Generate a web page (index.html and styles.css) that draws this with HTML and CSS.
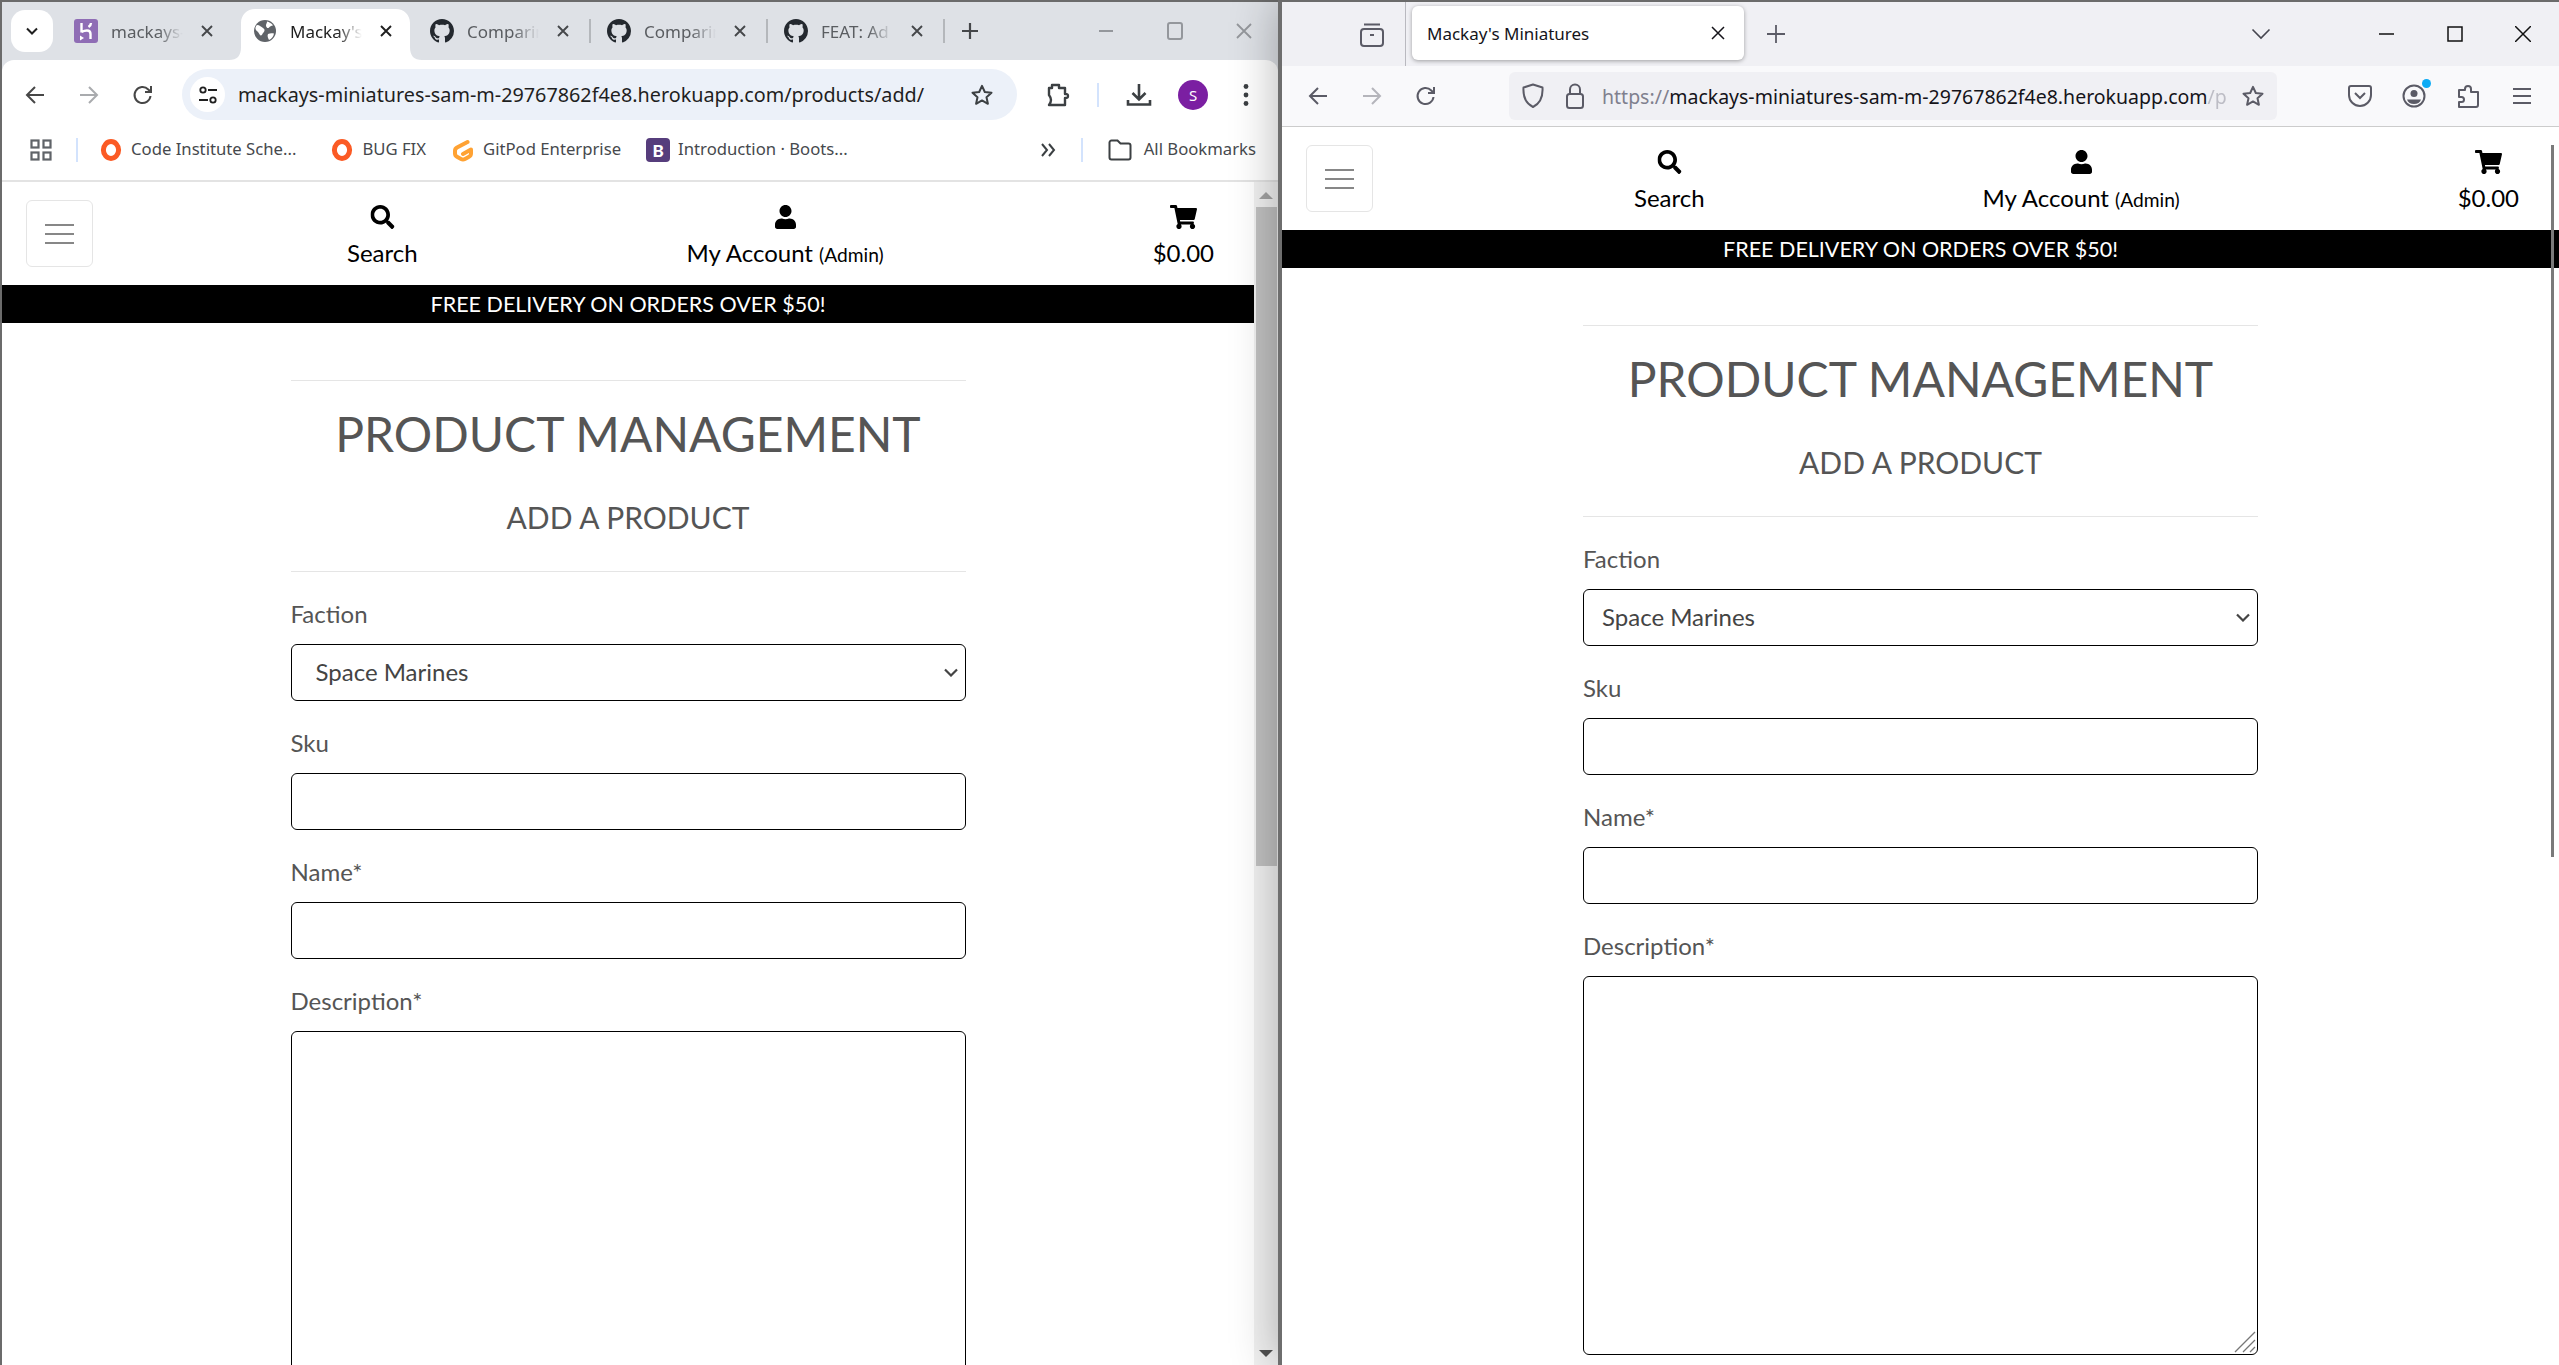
FILE: index.html
```html
<!DOCTYPE html>
<html lang="en">
<head>
  <meta charset="utf-8">
  <title>Mackay's Miniatures</title>
  <link rel="stylesheet" href="styles.css">
</head>
<body>
  <!-- Shared icons -->
  <svg class="icon-defs" xmlns="http://www.w3.org/2000/svg">
    <symbol id="i-github" viewBox="0 0 16 16"><path fill="#24292f" d="M8 0C3.58 0 0 3.58 0 8c0 3.54 2.29 6.53 5.47 7.59.4.07.55-.17.55-.38 0-.19-.01-.82-.01-1.49-2.01.37-2.53-.49-2.69-.94-.09-.23-.48-.94-.82-1.13-.28-.15-.68-.52-.01-.53.63-.01 1.08.58 1.23.82.72 1.21 1.87.87 2.33.66.07-.52.28-.87.51-1.07-1.78-.2-3.64-.89-3.64-3.95 0-.87.31-1.59.82-2.15-.08-.2-.36-1.02.08-2.12 0 0 .67-.21 2.2.82.64-.18 1.32-.27 2-.27.68 0 1.36.09 2 .27 1.53-1.04 2.2-.82 2.2-.82.44 1.1.16 1.92.08 2.12.51.56.82 1.27.82 2.15 0 3.07-1.87 3.75-3.65 3.95.29.25.54.73.54 1.48 0 1.07-.01 1.93-.01 2.2 0 .21.15.46.55.38A8.013 8.013 0 0016 8c0-4.42-3.58-8-8-8z"/></symbol>
    <symbol id="i-x" viewBox="0 0 14 14"><path d="M2 2l10 10M12 2L2 12" fill="none" stroke="currentColor" stroke-width="1.9"/></symbol>
    <symbol id="i-back" viewBox="0 0 24 24"><path d="M21 12H4M12 4l-8 8 8 8" fill="none" stroke="currentColor" stroke-width="2"/></symbol>
    <symbol id="i-forward" viewBox="0 0 24 24"><path d="M3 12h17M12 4l8 8-8 8" fill="none" stroke="currentColor" stroke-width="2"/></symbol>
    <symbol id="i-reload" viewBox="0 0 24 24"><path d="M19.5 13a8 8 0 1 1-2.2-6.5L20 9M20 3v6h-6" fill="none" stroke="currentColor" stroke-width="2"/></symbol>
    <symbol id="i-star" viewBox="0 0 24 24"><path d="M12 2.8l2.8 6.2 6.7.7-5 4.5 1.4 6.6-5.9-3.4-5.9 3.4 1.4-6.6-5-4.5 6.7-.7z" fill="none" stroke="currentColor" stroke-width="2" stroke-linejoin="round"/></symbol>
    <symbol id="i-search" viewBox="0 0 512 512"><path d="M505 442.7L405.3 343c-4.5-4.5-10.6-7-17-7H372c27.6-35.3 44-79.7 44-128C416 93.1 322.9 0 208 0S0 93.1 0 208s93.1 208 208 208c48.3 0 92.7-16.4 128-44v16.3c0 6.4 2.5 12.5 7 17l99.7 99.7c9.4 9.4 24.6 9.4 33.9 0l28.3-28.3c9.4-9.4 9.4-24.6.1-34zM208 336c-70.7 0-128-57.2-128-128 0-70.7 57.2-128 128-128 70.7 0 128 57.2 128 128 0 70.7-57.2 128-128 128z"/></symbol>
    <symbol id="i-user" viewBox="0 0 448 512"><path d="M224 256c70.7 0 128-57.3 128-128S294.7 0 224 0 96 57.3 96 128s57.3 128 128 128zm89.6 32h-16.7c-22.2 10.2-46.9 16-72.9 16s-50.6-5.8-72.9-16h-16.7C60.2 288 0 348.2 0 422.4V464c0 26.5 21.5 48 48 48h352c26.5 0 48-21.5 48-48v-41.6c0-74.2-60.2-134.4-134.4-134.4z"/></symbol>
    <symbol id="i-cart" viewBox="0 0 576 512"><path d="M528.12 301.319l47.273-208C578.806 78.301 567.391 64 551.99 64H159.208l-9.166-44.81C147.758 8.021 137.93 0 126.529 0H24C10.745 0 0 10.745 0 24v16c0 13.255 10.745 24 24 24h69.883l70.248 343.435C147.325 417.1 136 435.222 136 456c0 30.928 25.072 56 56 56s56-25.072 56-56c0-15.674-6.447-29.835-16.824-40h209.647C430.447 426.165 424 440.326 424 456c0 30.928 25.072 56 56 56s56-25.072 56-56c0-22.172-12.888-41.332-31.579-50.405l5.517-24.276c3.413-15.018-8.002-29.319-23.403-29.319H218.117l-6.545-32h293.145c11.206 0 20.92-7.754 23.403-18.681z"/></symbol>
    <symbol id="i-ring" viewBox="0 0 22 22"><ellipse cx="11" cy="11" rx="7.6" ry="8.4" fill="none" stroke="#fb5a24" stroke-width="5"/></symbol>
  </svg>

  <!-- Left window: Chrome -->
  <div class="win win-chrome">
    <div class="ch-tabs">
      <button class="ch-tabsearch"><svg width="14" height="14" viewBox="0 0 14 14"><path d="M2 4.500l5 5 5-5" fill="none" stroke="#1f1f1f" stroke-width="2"/></svg></button>
      <div class="tab tab-first">
        <svg class="favicon" viewBox="0 0 24 24"><rect width="24" height="24" rx="3" fill="#8f6db5"/><path d="M7.500 4v9.500M7.500 13c3-1.500 9-3 9 2v5M17 4c0 2-1 3-2.500 4" fill="none" stroke="#fff" stroke-width="2.400"/><path d="M6 16.500l4 2.500-4 2.500z" fill="#fff"/></svg>
        <span class="tab-title">mackays-</span>
        <svg class="tab-close"><use href="#i-x"/></svg>
      </div>
      <div class="tab tab-active">
        <svg class="tab-shape" viewBox="0 0 193 51"><path fill="#fff" d="M0 51C8 51 12 47 12 38V14C12 6 18 0 26 0H167C175 0 181 6 181 14V38C181 47 185 51 193 51Z"/></svg>
        <svg class="favicon" viewBox="0 0 24 24"><circle cx="12" cy="12" r="11" fill="#5f6368"/><path d="M4 6c3 0 4 2 6 3s2 3 .5 4.500-1 3-3 3c-1.500-1-1.500-3-3-4S1 9 4 6zM14 2.500c2 .5 5 2 6 4-2 .5-3 .5-4 2s-3 0-3-2 1-2 1-4zM15 15c2-1 4-1 6-.5-.5 3-2.500 5.500-5 6.500-1-2-2-4-1-6z" fill="#fff"/></svg>
        <span class="tab-title">Mackay's</span>
        <svg class="tab-close"><use href="#i-x"/></svg>
      </div>
      <div class="tab tab-sep">
        <svg class="favicon"><use href="#i-github"/></svg>
        <span class="tab-title">Comparin</span>
        <svg class="tab-close"><use href="#i-x"/></svg>
      </div>
      <div class="tab tab-sep">
        <svg class="favicon"><use href="#i-github"/></svg>
        <span class="tab-title">Comparin</span>
        <svg class="tab-close"><use href="#i-x"/></svg>
      </div>
      <div class="tab tab-sep">
        <svg class="favicon"><use href="#i-github"/></svg>
        <span class="tab-title">FEAT: Ad</span>
        <svg class="tab-close"><use href="#i-x"/></svg>
      </div>
      <svg class="ch-plus" width="24" height="24" viewBox="0 0 24 24"><path d="M12 4v16M4 12h16" stroke="#45474a" stroke-width="2.200"/></svg>
      <div class="ch-controls">
        <span class="ctl"><svg width="16" height="16" viewBox="0 0 16 16"><path d="M1 8h14" stroke="#94979c" stroke-width="2"/></svg></span>
        <span class="ctl"><svg width="16" height="20" viewBox="0 0 16 20"><rect x="1" y="2" width="14" height="16" rx="2" fill="none" stroke="#94979c" stroke-width="2"/></svg></span>
        <span class="ctl"><svg width="18" height="18" viewBox="0 0 18 18"><path d="M2 2l14 14M16 2L2 16" stroke="#94979c" stroke-width="1.800"/></svg></span>
      </div>
    </div>

    <div class="ch-toolbar">
      <button class="nav-btn"><svg width="24" height="24"><use href="#i-back"/></svg></button>
      <button class="nav-btn nav-off"><svg width="24" height="24"><use href="#i-forward"/></svg></button>
      <button class="nav-btn"><svg width="24" height="24"><use href="#i-reload"/></svg></button>
      <div class="ch-pill">
        <span class="ch-tune"><svg width="22" height="22" viewBox="0 0 22 22"><g fill="none" stroke="#1f1f1f" stroke-width="1.800"><circle cx="6" cy="6" r="2.700"/><path d="M11 6h9M2 16h9"/><circle cx="16" cy="16" r="2.700"/></g></svg></span>
        <span class="ch-url">mackays-miniatures-sam-m-29767862f4e8.herokuapp.com/products/add/</span>
        <svg class="ch-star" width="24" height="24"><use href="#i-star"/></svg>
      </div>
      <button class="nav-btn nav-ext"><svg width="26" height="26" viewBox="0 0 26 26"><path d="M8 3h7v3h6v6c2 0 3 0 3 2s-1 2-3 2v7H5c1.500-2 2-3 2-5s-.5-3-2-5V6h3z" fill="none" stroke="#3c4043" stroke-width="2.400" stroke-linejoin="round"/></svg></button>
      <i class="ch-divider"></i>
      <button class="nav-btn"><svg width="26" height="26" viewBox="0 0 26 26"><path d="M13 2v15M6.500 11l6.500 6.500 6.500-6.500M2 18v4.500h22V18" fill="none" stroke="#3c4043" stroke-width="2.600"/></svg></button>
      <span class="ch-avatar">S</span>
      <button class="nav-btn nav-dots"><svg width="6" height="24" viewBox="0 0 6 24"><circle cx="3" cy="3.500" r="2.400"/><circle cx="3" cy="12" r="2.400"/><circle cx="3" cy="20.500" r="2.400"/></svg></button>
    </div>

    <div class="ch-bookmarks">
      <svg class="bm-apps" width="22" height="22" viewBox="0 0 22 22"><g fill="none" stroke="#5f6368" stroke-width="2.200"><rect x="1.500" y="1.500" width="7" height="7"/><rect x="13.500" y="1.500" width="7" height="7"/><rect x="1.500" y="13.500" width="7" height="7"/><rect x="13.500" y="13.500" width="7" height="7"/></g></svg>
      <i class="bm-divider"></i>
      <span class="bm bm-long"><svg class="bm-icon"><use href="#i-ring"/></svg>Code Institute Sche...</span>
      <span class="bm"><svg class="bm-icon"><use href="#i-ring"/></svg>BUG FIX</span>
      <span class="bm bm-gitpod"><svg class="bm-icon" viewBox="0 0 22 24"><path d="M15.500 4L5 9.500C3.600 10.300 3 11.300 3 12.700V15.500C3 17 3.600 18 5 18.800L9 21C10.300 21.700 11.700 21.700 13 21L17 18.800C18.400 18 19 17 19 15.500V11.500L11 16" fill="none" stroke="#ffa233" stroke-width="4" stroke-linecap="round" stroke-linejoin="round"/></svg>GitPod Enterprise</span>
      <span class="bm"><span class="bm-boot">B</span>Introduction · Boots...</span>
      <span class="bm-more">
        <svg width="16" height="14" viewBox="0 0 16 14"><path d="M2 1l5 6-5 6M9 1l5 6-5 6" fill="none" stroke="#3c4043" stroke-width="2"/></svg>
      </span>
      <i class="bm-divider bm-divider-end"></i>
      <span class="bm bm-folder"><svg class="bm-icon bm-icon-folder" viewBox="0 0 24 22"><path d="M1.500 3.500a2 2 0 0 1 2-2h6l3 3h8a2 2 0 0 1 2 2v12a2 2 0 0 1-2 2h-17a2 2 0 0 1-2-2z" fill="none" stroke="#3c4043" stroke-width="2"/></svg>All Bookmarks</span>
    </div>

    <div class="ch-page">
      <div class="page">
        <div class="site-nav">
          <button class="toggler"><i></i><i></i><i></i></button>
          <div class="site-links">
            <a class="site-link"><svg class="site-icon" viewBox="0 0 512 512"><use href="#i-search"/></svg><span>Search</span></a>
            <a class="site-link"><svg class="site-icon" viewBox="0 0 448 512"><use href="#i-user"/></svg><span>My Account <small>(Admin)</small></span></a>
            <a class="site-link"><svg class="site-icon" viewBox="0 0 576 512"><use href="#i-cart"/></svg><span>$0.00</span></a>
          </div>
        </div>
        <div class="banner">FREE DELIVERY ON ORDERS OVER $50!</div>
        <main class="content">
          <hr>
          <h2>PRODUCT MANAGEMENT</h2>
          <h5>ADD A PRODUCT</h5>
          <hr>
          <form>
            <div class="field">
              <label>Faction</label>
              <select class="control control-select"><option>Space Marines</option></select>
            </div>
            <div class="field"><label>Sku</label><input class="control" type="text"></div>
            <div class="field"><label>Name*</label><input class="control" type="text"></div>
            <div class="field"><label>Description*</label><textarea class="control control-area"></textarea></div>
          </form>
        </main>
      </div>
      <div class="scrollbar">
        <span class="sb-up"></span>
        <span class="sb-thumb"></span>
        <span class="sb-down"></span>
      </div>
    </div>
  </div>

  <!-- Right window: Firefox -->
  <div class="win win-firefox">
    <div class="ff-tabs">
      <svg class="ff-view" width="24" height="26" viewBox="0 0 24 26"><g fill="none" stroke="#5b5b66" stroke-width="2"><rect x="1" y="8" width="22" height="17" rx="3"/><path d="M4 3.500h16"/><path d="M10 14h4"/></g></svg>
      <i class="ff-sep"></i>
      <div class="ff-tab">
        <span class="ff-tab-title">Mackay's Miniatures</span>
        <svg class="ff-tab-close" width="14" height="14" viewBox="0 0 14 14"><path d="M1 1l12 12M13 1L1 13" stroke="#15141a" stroke-width="1.500"/></svg>
      </div>
      <svg class="ff-plus" width="20" height="20" viewBox="0 0 20 20"><path d="M10 1v18M1 10h18" stroke="#5b5b66" stroke-width="1.800"/></svg>
      <svg class="ff-list" width="20" height="12" viewBox="0 0 20 12"><path d="M1.500 1.500L10 10l8.500-8.500" fill="none" stroke="#45454f" stroke-width="1.600"/></svg>
      <span class="ctl ctl-ff"><svg width="16" height="16" viewBox="0 0 16 16"><path d="M0 8h15" stroke="#111" stroke-width="1.500"/></svg></span>
      <span class="ctl ctl-ff"><svg width="16" height="16" viewBox="0 0 16 16"><rect x="1" y="1" width="14" height="14" fill="none" stroke="#111" stroke-width="1.500"/></svg></span>
      <span class="ctl ctl-ff"><svg width="16" height="16" viewBox="0 0 16 16"><path d="M0 0l16 16M16 0L0 16" stroke="#111" stroke-width="1.500"/></svg></span>
    </div>

    <div class="ff-toolbar">
      <button class="nav-btn ff-btn"><svg width="24" height="24"><use href="#i-back"/></svg></button>
      <button class="nav-btn ff-btn nav-off"><svg width="24" height="24"><use href="#i-forward"/></svg></button>
      <button class="nav-btn ff-btn"><svg width="24" height="24"><use href="#i-reload"/></svg></button>
      <div class="ff-urlbar">
        <svg class="ff-shield" width="24" height="26" viewBox="0 0 24 26"><path d="M12 1.500l9.500 3c.5 8-1.500 15.500-9.500 19.500C4 20 2 12.500 2.500 4.500z" fill="none" stroke="#5b5b66" stroke-width="2" stroke-linejoin="round"/></svg>
        <svg class="ff-lock" width="20" height="26" viewBox="0 0 20 26"><g fill="none" stroke="#5b5b66" stroke-width="2"><rect x="2" y="11" width="16" height="14" rx="2.500"/><path d="M5 11V6.500a5 5 0 0 1 10 0V11"/></g></svg>
        <span class="ff-url"><span class="ff-url-dim">https://</span>mackays-miniatures-sam-m-29767862f4e8.herokuapp.com<span class="ff-url-dim ff-url-fade">/p</span></span>
        <svg class="ff-star" width="24" height="24"><use href="#i-star"/></svg>
      </div>
      <div class="ff-actions">
        <button class="nav-btn ff-btn"><svg width="24" height="24" viewBox="0 0 24 24"><path d="M3 2h18a2 2 0 0 1 2 2v7c0 6-5 11-11 11S1 17 1 11V4a2 2 0 0 1 2-2z" fill="none" stroke="#5b5b66" stroke-width="2"/><path d="M7 9l5 5 5-5" fill="none" stroke="#5b5b66" stroke-width="2"/></svg></button>
        <button class="nav-btn ff-btn ff-account"><svg width="24" height="24" viewBox="0 0 24 24"><circle cx="12" cy="12" r="10.500" fill="none" stroke="#5b5b66" stroke-width="2"/><circle cx="12" cy="9.500" r="3.500" fill="#5b5b66"/><path d="M5 15.500h14c-1 3-3.500 4.500-7 4.500s-6-1.500-7-4.500z" fill="#5b5b66"/></svg><i class="ff-dot"></i></button>
        <button class="nav-btn ff-btn"><svg width="22" height="24" viewBox="0 0 22 24"><path d="M2 23h17a2 2 0 0 0 2-2V8h-7V5a3 3 0 0 0-6 0v1H2v7h2.500a2.500 2.500 0 0 1 0 5H2z" fill="none" stroke="#5b5b66" stroke-width="2" stroke-linejoin="round"/></svg></button>
        <button class="nav-btn ff-btn"><svg width="20" height="18" viewBox="0 0 20 18"><path d="M1 2h18M1 9h18M1 16h18" stroke="#5b5b66" stroke-width="2"/></svg></button>
      </div>
    </div>

    <div class="page">
      <div class="site-nav">
        <button class="toggler"><i></i><i></i><i></i></button>
        <div class="site-links">
          <a class="site-link"><svg class="site-icon" viewBox="0 0 512 512"><use href="#i-search"/></svg><span>Search</span></a>
          <a class="site-link"><svg class="site-icon" viewBox="0 0 448 512"><use href="#i-user"/></svg><span>My Account <small>(Admin)</small></span></a>
          <a class="site-link"><svg class="site-icon" viewBox="0 0 576 512"><use href="#i-cart"/></svg><span>$0.00</span></a>
        </div>
      </div>
      <div class="banner">FREE DELIVERY ON ORDERS OVER $50!</div>
      <main class="content">
        <hr>
        <h2>PRODUCT MANAGEMENT</h2>
        <h5>ADD A PRODUCT</h5>
        <hr>
        <form>
          <div class="field">
            <label>Faction</label>
            <select class="control control-select"><option>Space Marines</option></select>
          </div>
          <div class="field"><label>Sku</label><input class="control" type="text"></div>
          <div class="field"><label>Name*</label><input class="control" type="text"></div>
          <div class="field">
            <label>Description*</label>
            <div class="area-wrap">
              <textarea class="control control-area"></textarea>
              <svg class="grip" width="22" height="22" viewBox="0 0 22 22"><path d="M21 1L1 21M21 9l-12 12M21 16l-5 5" stroke="#777" stroke-width="1.300"/></svg>
            </div>
          </div>
        </form>
      </main>
      <span class="ff-scroll"></span>
    </div>
  </div>
</body>
</html>
```

FILE: styles.css
```css
/* Desktop: two browser windows side by side */
html, body {
  margin: 0;
  height: 100%;
  overflow: hidden;
  background: #fff;
}

body {
  display: flex;
  font-family: "Lato", sans-serif;
}

button {
  padding: 0;
  border: 0;
  background: none;
  color: inherit;
}

.icon-defs {
  display: none;
}

.win {
  display: flex;
  flex-direction: column;
  height: 1365px;
  box-sizing: border-box;
  border-top: 2px solid #6b6b6b;
  overflow: hidden;
}

.win-chrome {
  width: 1278px;
  flex: none;
  border-left: 2px solid #6b6b6b;
  background: #dee1e6;
  font-family: "Noto Sans", sans-serif;
}

.win-firefox {
  position: relative;
  width: 1281px;
  flex: none;
  border-left: 4px solid #6e6e6e;
  background: #f0f0f4;
  font-family: "Noto Sans", sans-serif;
  box-shadow: 0 0 44px rgba(0, 0, 0, 0.3);
  overflow: visible;
}

/* Shared toolbar buttons */
.nav-btn {
  display: flex;
  align-items: center;
  justify-content: center;
  flex: none;
  width: 40px;
  height: 40px;
  color: #474747;
}

.nav-off {
  color: #a9abae;
}

.ctl {
  display: flex;
  align-items: center;
  justify-content: center;
  flex: none;
  width: 69px;
}

/* Chrome tab strip */
.ch-tabs {
  display: flex;
  align-items: center;
  flex: none;
  height: 58px;
}

.ch-tabsearch {
  display: flex;
  align-items: center;
  justify-content: center;
  flex: none;
  width: 42px;
  height: 42px;
  margin: 0 7px 0 9px;
  border-radius: 14px;
  background: #fff;
}

.tab {
  position: relative;
  display: flex;
  align-items: center;
  flex: none;
  width: 177px;
  height: 100%;
  box-sizing: border-box;
  padding-left: 16px;
  color: #5a5d61;
  font-size: 17px;
}

.tab-first {
  padding-left: 14px;
}

.tab-sep::after {
  content: "";
  position: absolute;
  right: 0;
  top: 17px;
  width: 2px;
  height: 24px;
  background: #b4b7bb;
}

.tab-active {
  color: #1f1f1f;
}

.tab-shape {
  position: absolute;
  left: -8px;
  top: 7px;
  width: 193px;
  height: 51px;
}

.favicon {
  position: relative;
  flex: none;
  width: 24px;
  height: 24px;
}

.tab-title {
  position: relative;
  flex: none;
  width: 72px;
  margin: 0 17px 0 13px;
  white-space: nowrap;
  -webkit-mask-image: linear-gradient(to right, #000 65%, transparent);
  mask-image: linear-gradient(to right, #000 65%, transparent);
}

.tab-close {
  position: relative;
  flex: none;
  width: 14px;
  height: 14px;
  color: #45474a;
}

.tab-active .tab-close {
  color: #1f1f1f;
}

.ch-plus {
  flex: none;
  margin-left: 13px;
}

.ch-controls {
  display: flex;
  margin-left: auto;
}

/* Chrome toolbar */
.ch-toolbar {
  display: flex;
  align-items: center;
  flex: none;
  height: 60px;
  box-sizing: border-box;
  padding: 9px 0 0 13px;
  border-radius: 12px 12px 0 0;
  background: #fff;
}

.ch-toolbar .nav-btn + .nav-btn {
  margin-left: 14px;
}

.ch-pill {
  display: flex;
  align-items: center;
  flex: none;
  width: 835px;
  height: 51px;
  box-sizing: border-box;
  margin: 0 0 0 19px;
  padding: 0 23px 0 8px;
  border-radius: 26px;
  background: #ecf1f9;
}

.ch-tune {
  display: flex;
  align-items: center;
  justify-content: center;
  flex: none;
  width: 35px;
  height: 35px;
  border-radius: 50%;
  background: #fff;
}

.ch-url {
  margin-left: 13px;
  color: #1f1f1f;
  font-size: 19.800px;
  white-space: nowrap;
}

.ch-star {
  flex: none;
  margin-left: auto;
  color: #3c4043;
}

.nav-ext {
  margin-left: 20px;
}

.ch-divider {
  flex: none;
  width: 2px;
  height: 24px;
  margin: 0 20px;
  background: #d3e3fd;
}

.ch-avatar {
  display: flex;
  align-items: center;
  justify-content: center;
  flex: none;
  width: 30px;
  height: 30px;
  margin-left: 19px;
  border-radius: 50%;
  background: #7b1fa2;
  color: #fff;
  font-size: 15px;
}

.ch-toolbar .nav-dots {
  margin-left: 18px;
}

.nav-dots svg {
  fill: #3c4043;
}

/* Chrome bookmarks */
.ch-bookmarks {
  display: flex;
  align-items: center;
  flex: none;
  height: 60px;
  padding: 0 22px 0 28px;
  border-bottom: 2px solid #e3e3e3;
  box-sizing: content-box;
  background: #fff;
  color: #46494d;
  font-size: 16.700px;
}

.bm-divider {
  flex: none;
  width: 2px;
  height: 24px;
  margin: 0 22px 0 24px;
  background: #d3e3fd;
}

.bm {
  display: flex;
  align-items: center;
  flex: none;
  margin-right: 25px;
  margin-bottom: 3px;
  white-space: nowrap;
}

.bm-long {
  margin-right: 35px;
}

.bm-gitpod {
  margin-left: 1px;
}

.bm-icon {
  flex: none;
  width: 22px;
  height: 22px;
  margin-top: 3px;
  margin-right: 9px;
}

.bm-gitpod .bm-icon {
  height: 24px;
}

.bm-icon-folder {
  width: 24px;
  margin-right: 12px;
}

.bm-boot {
  display: flex;
  align-items: center;
  justify-content: center;
  flex: none;
  width: 24px;
  height: 24px;
  margin-top: 3px;
  margin-right: 8px;
  border-radius: 4px;
  background: #563d7c;
  color: #fff;
  font-family: "Lato", sans-serif;
  font-size: 17px;
  font-weight: 900;
}

.bm-more {
  display: flex;
  margin-left: auto;
}

.bm-divider-end {
  margin: 0 25px;
}

.bm-folder {
  margin-right: 0;
}

.ch-page {
  display: flex;
  flex: 1;
  min-height: 0;
  background: #fff;
}

/* Chrome scrollbar */
.scrollbar {
  display: flex;
  flex-direction: column;
  align-items: center;
  flex: none;
  width: 24px;
  background: #f1f1f1;
}

.sb-up, .sb-down {
  width: 0;
  height: 0;
  border-left: 7px solid transparent;
  border-right: 7px solid transparent;
}

.sb-up {
  margin-top: 10px;
  border-bottom: 7px solid #a3a3a3;
}

.sb-thumb {
  width: 21px;
  height: 659px;
  margin-top: 8px;
  background: #c1c1c1;
}

.sb-down {
  margin-top: auto;
  margin-bottom: 8px;
  border-top: 7px solid #505050;
}

/* Firefox tab strip */
.ff-tabs {
  display: flex;
  align-items: center;
  flex: none;
  height: 64px;
}

.ff-view {
  flex: none;
  margin-left: 78px;
}

.ff-sep {
  flex: none;
  width: 1px;
  height: 64px;
  margin: 0 6px 0 21px;
  background: #b9b9bf;
}

.ff-tab {
  display: flex;
  align-items: center;
  flex: none;
  width: 332px;
  height: 54px;
  box-sizing: border-box;
  margin-bottom: 2px;
  padding: 0 19px 0 15px;
  border-radius: 6px;
  background: #fff;
  box-shadow: 0 1px 4px rgba(0, 0, 0, 0.35);
  color: #15141a;
  font-size: 17px;
}

.ff-tab-close {
  margin-left: auto;
}

.ff-plus {
  flex: none;
  margin-left: 22px;
}

.ff-list {
  flex: none;
  margin-left: 465px;
  margin-right: 82px;
}

.ctl-ff {
  width: 68px;
}

/* Firefox toolbar */
.ff-toolbar {
  display: flex;
  align-items: center;
  flex: none;
  height: 60px;
  padding-left: 16px;
  border-bottom: 1px solid #cccccc;
  box-sizing: content-box;
  background: #f9f9fb;
}

.ff-btn {
  color: #5b5b66;
}

.ff-btn + .ff-btn {
  margin-left: 14px;
}

.ff-btn.nav-off {
  color: #b5b5bb;
}

.ff-urlbar {
  display: flex;
  align-items: center;
  flex: none;
  width: 768px;
  height: 48px;
  box-sizing: border-box;
  margin-left: 63px;
  padding: 0 12px;
  border-radius: 6px;
  background: #f0f0f4;
}

.ff-shield {
  flex: none;
}

.ff-lock {
  flex: none;
  margin-left: 20px;
}

.ff-url {
  flex: 1;
  min-width: 0;
  margin: 0 12px 0 17px;
  color: #15141a;
  font-size: 19.500px;
  white-space: nowrap;
}

.ff-url-dim {
  color: #80808e;
}

.ff-url-fade {
  opacity: 0.45;
}

.ff-star {
  flex: none;
  color: #5b5b66;
}

.ff-actions {
  display: flex;
  margin-left: 63px;
}

.ff-account {
  position: relative;
}

.ff-dot {
  position: absolute;
  right: 3px;
  top: 3px;
  width: 9px;
  height: 9px;
  border-radius: 50%;
  background: #0dabf5;
}

/* The site itself, same markup in both windows */
.page {
  position: relative;
  flex: 1;
  min-width: 0;
  background: #fff;
  font-family: "Lato", sans-serif;
}

.site-nav {
  display: flex;
  align-items: flex-start;
  justify-content: space-between;
  height: 103px;
  padding: 0 40px 0 24px;
}

.toggler {
  display: flex;
  flex-direction: column;
  align-items: center;
  justify-content: center;
  gap: 7px;
  flex: none;
  width: 67px;
  height: 67px;
  margin-top: 18px;
  box-sizing: border-box;
  border: 1px solid #e5e5e5;
  border-radius: 6px;
}

.toggler i {
  display: block;
  width: 29px;
  height: 2px;
  background: #878787;
}

.site-links {
  display: flex;
  padding-top: 23px;
}

.win-chrome .site-links {
  gap: 269px;
}

.win-firefox .site-links {
  gap: 278px;
}

.site-link {
  display: flex;
  flex-direction: column;
  align-items: center;
  color: #000;
  font-size: 24px;
  line-height: 36px;
}

.site-link small {
  font-size: 19.200px;
}

.site-icon {
  width: 27px;
  height: 24px;
  margin-bottom: 6px;
}

.banner {
  height: 38px;
  background: #000;
  color: #fff;
  font-size: 21.500px;
  line-height: 38px;
  text-align: center;
}

.content {
  width: 675px;
  margin: 0 auto;
  padding-top: 57px;
  color: #555;
}

hr {
  height: 1px;
  margin: 24px 0;
  border: 0;
  background: #e5e5e5;
}

.content > hr:first-child {
  margin-top: 0;
}

h2 {
  margin: 0 0 12px;
  font-size: 48px;
  font-weight: 400;
  line-height: 57.600px;
  text-align: center;
}

h5 {
  margin: 36px 0 36px;
  font-size: 30px;
  font-weight: 400;
  line-height: 36px;
  text-align: center;
}

.field {
  margin-bottom: 24px;
}

label {
  display: block;
  margin-bottom: 12px;
  font-size: 24px;
  line-height: 36px;
}

.control {
  display: block;
  width: 100%;
  height: 57px;
  box-sizing: border-box;
  padding: 9px 18px;
  border: 1px solid #000;
  border-radius: 6px;
  background: #fff;
  color: #444;
  font-family: "Lato", sans-serif;
  font-size: 24px;
  line-height: 36px;
}

.control-select {
  padding-left: 24px;
  appearance: none;
  background: #fff url("data:image/svg+xml,%3Csvg xmlns='http://www.w3.org/2000/svg' width='14' height='9'%3E%3Cpath d='M1 1.500l6 6 6-6' fill='none' stroke='%23444' stroke-width='2.200'/%3E%3C/svg%3E") no-repeat right 7px center;
}

.win-firefox .control-select {
  padding-left: 18px;
}

.control-area {
  height: 379px;
  resize: none;
}

.area-wrap {
  position: relative;
}

.grip {
  position: absolute;
  right: 2px;
  bottom: 2px;
}

.ff-scroll {
  position: absolute;
  right: 5px;
  top: 18px;
  width: 3px;
  height: 712px;
  background: #7a7a7a;
}
```
